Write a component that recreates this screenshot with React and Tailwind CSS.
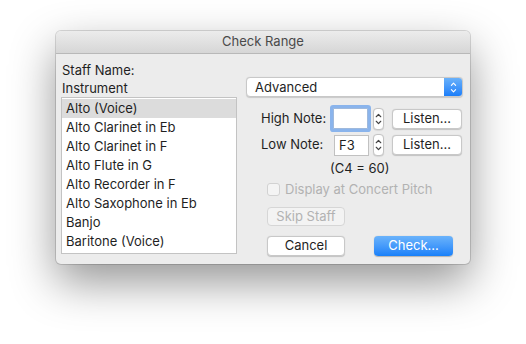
import React from "react";

const instruments = [
  "Alto (Voice)",
  "Alto Clarinet in Eb",
  "Alto Clarinet in F",
  "Alto Flute in G",
  "Alto Recorder in F",
  "Alto Saxophone in Eb",
  "Banjo",
  "Baritone (Voice)",
];

function Chevrons({ color = "#333", className = "" }) {
  return (
    <svg viewBox="0 0 10 20" className={className} fill="none" stroke={color} strokeWidth="1.3" strokeLinecap="round" strokeLinejoin="round">
      <path d="M2.5 7.5 L5 4.8 L7.5 7.5" />
      <path d="M2.5 12.5 L5 15.2 L7.5 12.5" />
    </svg>
  );
}

function Stepper() {
  return (
    <div className="w-[11px] h-[22px] rounded-[4px] border border-[#c4c4c4] bg-white flex items-center justify-center shadow-[0_0.5px_1px_rgba(0,0,0,0.15)]">
      <Chevrons className="w-[9px] h-[18px]" color="#444" />
    </div>
  );
}

function Button({ children, className = "" }) {
  return (
    <div
      className={`h-[20px] rounded-[4px] bg-white border border-[#c8c8c8] shadow-[0_0.5px_1px_rgba(0,0,0,0.18)] flex items-center justify-center text-[13px] text-[#1f1f1f] ${className}`}
    >
      {children}
    </div>
  );
}

export default function App() {
  return (
    <div
      className="w-[526px] h-[344px] bg-white pl-[56px] pt-[31px]"
      style={{ fontFamily: "Inter, 'Noto Sans', 'Liberation Sans', sans-serif" }}
    >
      <div className="w-[414px] h-[233px] rounded-[5px] bg-[#ececec] shadow-[0_18px_45px_rgba(0,0,0,0.42),0_0_0_1px_rgba(0,0,0,0.14)] overflow-hidden flex flex-col">
        {/* title bar */}
        <div className="h-[23px] shrink-0 bg-gradient-to-b from-[#ececec] to-[#d6d6d6] border-b border-[#b8b8b8] flex items-center justify-center text-[13px] text-[#4a4a4a]">
          Check Range
        </div>

        <div className="flex flex-1">
          {/* left column */}
          <div className="w-[190px] pl-[5px] pt-[7px] flex flex-col">
            <div className="h-[18px] pl-[1px] text-[13px] leading-[18px] text-[#1f1f1f]">Staff Name:</div>
            <div className="h-[18px] pl-[1px] text-[13px] leading-[18px] text-[#1f1f1f]">Instrument</div>
            <div className="w-[176px] h-[157px] bg-white border border-[#c3c3c3] pt-[1px]">
              {instruments.map((name, i) => (
                <div
                  key={name}
                  className={`h-[19px] pl-[4px] text-[13px] leading-[19px] text-[#1f1f1f] ${i === 0 ? "bg-[#dcdcdc]" : ""}`}
                >
                  {name}
                </div>
              ))}
            </div>
          </div>

          {/* right column */}
          <div className="flex flex-col pt-[23px]">
            {/* popup */}
            <div className="w-[217px] h-[20px] rounded-[4px] bg-white border border-[#c8c8c8] shadow-[0_0.5px_1px_rgba(0,0,0,0.15)] flex items-stretch overflow-hidden">
              <div className="flex-1 pl-[8px] text-[13px] leading-[18px] text-[#1f1f1f]">Advanced</div>
              <div className="w-[18px] bg-gradient-to-b from-[#69b1fa] to-[#1a7ef9] flex items-center justify-center">
                <Chevrons className="w-[9px] h-[17px]" color="#ffffff" />
              </div>
            </div>

            {/* high note */}
            <div className="mt-[9px] h-[25px] flex items-center">
              <div className="w-[87px] pl-[15px] text-[13px] text-[#1f1f1f]">High Note:</div>
              <div className="w-[35px] h-[21px] bg-white border border-[#9fb9dc] rounded-[1px] ring-[3px] ring-[#8ab4ec]" />
              <div className="ml-[5px]">
                <Stepper />
              </div>
              <Button className="ml-[8px] w-[70px] h-[19px]">Listen...</Button>
            </div>

            {/* low note */}
            <div className="mt-[3px] h-[22px] flex items-center">
              <div className="w-[88px] pl-[15px] text-[13px] text-[#1f1f1f]">Low Note:</div>
              <div className="w-[35px] h-[21px] bg-white border border-[#c1c1c1] pl-[4px] text-[13px] leading-[19px] text-[#1f1f1f]">
                F3
              </div>
              <div className="ml-[4px]">
                <Stepper />
              </div>
              <Button className="ml-[8px] w-[70px] h-[19px]">Listen...</Button>
            </div>

            <div className="mt-[3px] h-[18px] pl-[84px] text-[13px] leading-[18px] text-[#1f1f1f]">(C4 = 60)</div>

            {/* checkbox */}
            <div className="mt-[6px] h-[13px] pl-[21px] flex items-center">
              <div className="w-[13px] h-[13px] rounded-[3px] border border-[#d2d2d2] bg-[#f4f4f4]" />
              <span className="ml-[5px] text-[13px] text-[#b2b2b2]">Display at Concert Pitch</span>
            </div>

            <div className="mt-[11px] pl-[21px]">
              <div className="w-[78px] h-[19px] rounded-[4px] border border-[#d6d6d6] bg-[#f3f3f3] flex items-center justify-center text-[13px] text-[#b2b2b2]">
                Skip Staff
              </div>
            </div>

            <div className="mt-[10px] pl-[21px] flex">
              <Button className="w-[78px]">Cancel</Button>
              <div className="ml-[29px] w-[79px] h-[20px] rounded-[4px] bg-gradient-to-b from-[#6ab3fb] to-[#1680f9] shadow-[0_0.5px_1px_rgba(0,0,0,0.25)] flex items-center justify-center text-[13px] text-white">
                Check...
              </div>
            </div>
          </div>
        </div>
      </div>
    </div>
  );
}
